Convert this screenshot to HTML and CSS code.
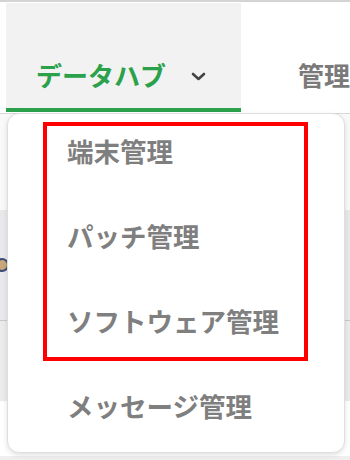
FILE: index.html
```html
<!DOCTYPE html>
<html lang="ja">
<head>
<meta charset="utf-8">
<link rel="stylesheet" href="styles.css">
</head>
<body>
<div class="app">
  <header class="nav">
    <div class="tab active">
      <span class="tab-label">データハブ</span>
      <svg class="chev" width="15" height="9" viewBox="0 0 15 9"><polyline points="2,2 7.5,7 13,2" fill="none" stroke="#444" stroke-width="2.6" stroke-linecap="round" stroke-linejoin="round"/></svg>
    </div>
    <div class="tab other"><span class="tab-label">管理</span></div>
  </header>
  <main class="content">
    <div class="row r1"></div>
    <div class="row r2"><span class="avatar"></span></div>
    <div class="row r3"></div>
    <div class="row r4"></div>
    <div class="row r5"></div>
  </main>
  <div class="menu">
    <div class="highlight">
      <div class="item first">端末管理</div>
      <div class="item">パッチ管理</div>
      <div class="item">ソフトウェア管理</div>
    </div>
    <div class="item last">メッセージ管理</div>
  </div>
</div>
</body>
</html>
```
FILE: styles.css
```css
html, body {
  margin: 0;
  padding: 0;
  background: #ffffff;
}
body {
  font-family: "Noto Sans CJK JP", "Noto Sans", sans-serif;
  width: 350px;
  height: 460px;
  overflow: hidden;
}
.app {
  position: relative;
  width: 350px;
  height: 460px;
}
.nav {
  display: flex;
  align-items: flex-end;
  border-top: 2px solid #d4d4d4;
  border-bottom: 1px solid #d8d8d8;
  padding-top: 1px;
  box-sizing: border-box;
  height: 114px;
}
.tab {
  display: flex;
  align-items: center;
  font-size: 26px;
  font-weight: 700;
  line-height: 26px;
}
.tab.active {
  margin-left: 6px;
  width: 242px;
  box-sizing: border-box;
  padding: 59px 0 20px 30px;
  background: #f2f2f2;
  border-bottom: 4px solid #2aa14a;
  color: #2aa14a;
  margin-bottom: 1px;
}
.chev {
  margin-left: 25px;
  margin-top: 2px;
}
.tab.other {
  margin-left: 57px;
  color: #7a7a7a;
  padding-bottom: 25px;
  white-space: nowrap;
}
.content {
  display: flex;
  flex-direction: column;
}
.row { width: 100%; }
.r1 { height: 96px; background: #f9f9f9; }
.r2 {
  height: 110px;
  background: #e8e9eb;
  border-bottom: 1px solid #c9c9c9;
  display: flex;
  align-items: center;
}
.avatar {
  width: 10px;
  height: 10px;
  margin-left: -5px;
  border-radius: 50%;
  background: #c9a77a;
  border: 2px solid #3c4a7a;
}
.r3 { height: 80px; background: #ebebed; }
.r4 { height: 55px; background: #ffffff; }
.r5 { height: 20px; background: #efefef; }

.menu {
  position: absolute;
  left: 7px;
  top: 113px;
  width: 338px;
  height: 340px;
  box-sizing: border-box;
  background: #ffffff;
  border: 1px solid #dedede;
  border-radius: 12px;
  box-shadow: 0 2px 5px rgba(0, 0, 0, 0.12);
  padding-top: 8px;
}
.highlight {
  margin-left: 35px;
  width: 265px;
  box-sizing: border-box;
  border: 4px solid #ff0000;
  padding: 8px 0 19px 20px;
}
.item {
  font-size: 26.5px;
  font-weight: 700;
  line-height: 34px;
  color: #7f7f7f;
  white-space: nowrap;
  margin-top: 51px;
}
.item.first { margin-top: 0; }
.item.last {
  margin-top: 28px;
  padding-left: 59px;
}
```
